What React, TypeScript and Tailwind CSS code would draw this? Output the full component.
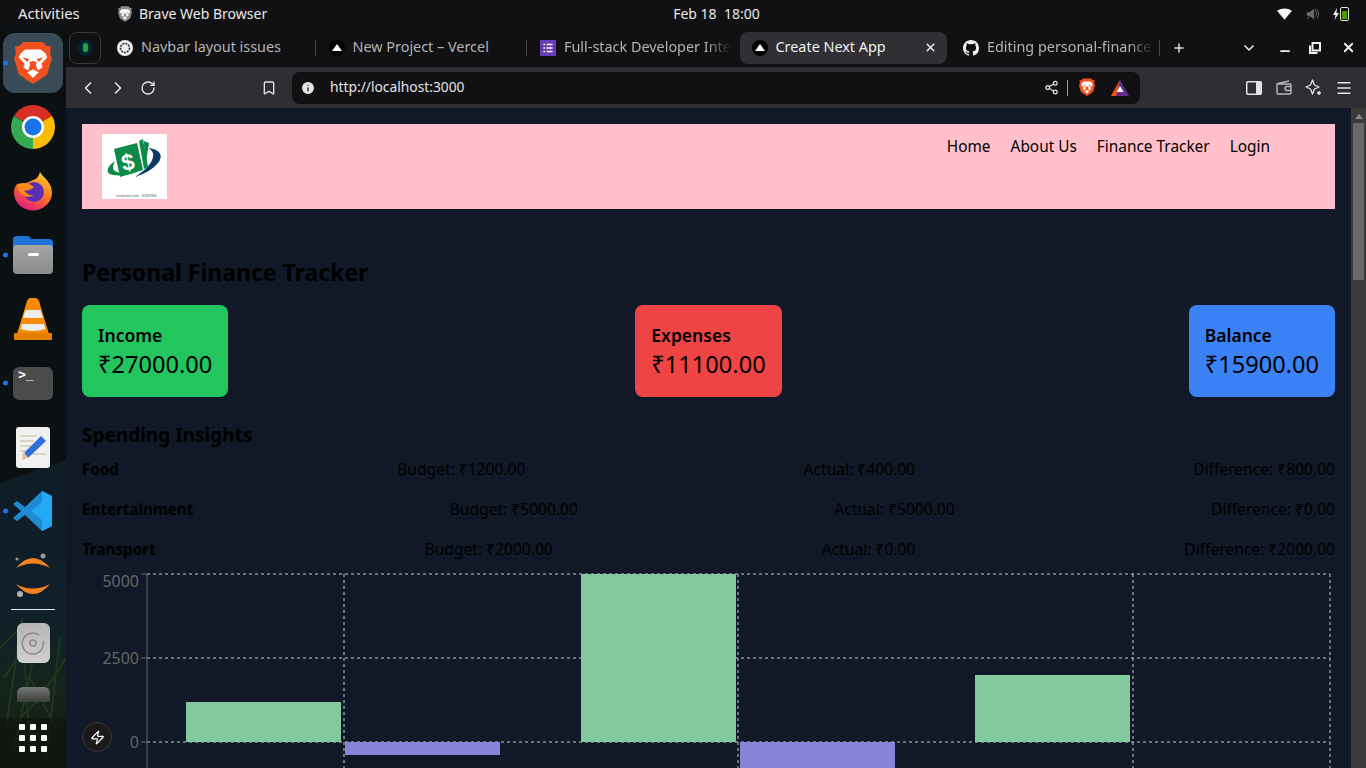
import {
  ChevronDown,
  ChevronLeft,
  ChevronRight,
  Bookmark,
  Info,
  Menu,
  Minus,
  Plus,
  RotateCw,
  Share2,
  X,
  Zap,
} from 'lucide-react'
import type { ReactNode } from 'react'

const BraveIcon = ({ size = 40, gray = false }: { size?: number; gray?: boolean }) => {
  const base = gray ? '#8c8c8c' : '#f1511f'
  return (
    <svg width={size} height={size * 1.15} viewBox="0 0 40 46">
      <path d="M10 1h20l4 4 5 1-1 8 2 4-5 17-10 7-5 3-5-3-10-7L0 18l2-4-1-8 5-1z" fill={base} />
      <path
        d="M12 9h16l5 4 2 4-6 7 1 4-5 3-2-6 1-3-4-1-4 1 1 3-2 6-5-3 1-4-6-7 2-4z"
        fill="#fff"
      />
      <path d="M9 17l7 2-2 3zM31 17l-7 2 2 3z" fill={base} />
      <path d="M14 33l6-3 6 3-6 6z" fill="#fff" />
    </svg>
  )
}

const VercelDot = () => (
  <span className="flex h-4 w-4 shrink-0 items-center justify-center rounded-full bg-black">
    <span className="h-0 w-0 border-x-[5px] border-b-[7px] border-x-transparent border-b-white" />
  </span>
)

const GptDot = () => (
  <svg width="16" height="16" viewBox="0 0 16 16" className="shrink-0">
    <circle cx="8" cy="8" r="8" fill="#eee" />
    <circle cx="8" cy="8" r="4.5" fill="none" stroke="#333" strokeWidth="1.6" strokeDasharray="2 1" />
  </svg>
)

const FormsIcon = () => (
  <svg width="16" height="16" viewBox="0 0 16 16" className="shrink-0">
    <rect width="16" height="16" rx="1" fill="#673ab7" />
    <path d="M3.5 4.5h1.5M6.5 4.5h6M3.5 8h1.5M6.5 8h6M3.5 11.5h1.5M6.5 11.5h6" stroke="#fff" strokeWidth="1.6" />
  </svg>
)

const GithubIcon = () => (
  <svg width="16" height="16" viewBox="0 0 16 16" fill="#f2f2f2" className="shrink-0">
    <path d="M8 0C3.58 0 0 3.58 0 8c0 3.54 2.29 6.53 5.47 7.59.4.07.55-.17.55-.38v-1.34c-2.23.48-2.7-1.07-2.7-1.07-.36-.92-.89-1.17-.89-1.17-.73-.5.05-.49.05-.49.8.06 1.22.82 1.22.82.72 1.22 1.87.87 2.33.66.07-.52.28-.87.51-1.07-1.78-.2-3.64-.89-3.64-3.95 0-.87.31-1.59.82-2.15-.08-.2-.36-1.02.08-2.12 0 0 .67-.21 2.2.82a7.6 7.6 0 0 1 4 0c1.53-1.04 2.2-.82 2.2-.82.44 1.1.16 1.92.08 2.12.51.56.82 1.27.82 2.15 0 3.07-1.87 3.75-3.65 3.95.29.25.54.73.54 1.48v2.2c0 .21.15.46.55.38A8 8 0 0 0 16 8c0-4.42-3.58-8-8-8z" />
  </svg>
)

type TabProps = {
  icon: ReactNode
  title: string
  active?: boolean
  fade?: boolean
  divider?: boolean
}

const Tab = ({ icon, title, active, fade, divider }: TabProps) => (
  <div className="relative flex h-8 w-[211.5px] shrink-0 items-center px-[2px]">
    <div
      className={`flex h-8 w-full items-center gap-2 rounded-lg pl-[12px] ${fade ? 'pr-[5px]' : 'pr-[10px]'} ${
        active ? 'bg-[#2f2f34] text-[#f0f0f0]' : 'text-[#b4b4b6]'
      }`}
    >
      {icon}
      <span
        className={`flex-1 overflow-hidden whitespace-nowrap pb-[2px] text-[14.4px] ${
          fade ? '[mask-image:linear-gradient(to_right,black_85%,transparent)]' : ''
        }`}
      >
        {title}
      </span>
      {active && <X size={13} strokeWidth={3} className="text-[#e6e6e6]" />}
    </div>
    {divider && <span className="absolute -right-px h-4 w-px bg-[#48484c]" />}
  </div>
)

const TopBar = () => (
  <div className="flex h-7 shrink-0 items-center bg-[#111113] text-[14px] text-[#e9e9e9]">
    <span className="ml-[18px] w-[100px] pb-[2px] text-[14.8px]">Activities</span>
    <BraveIcon size={14} gray />
    <span className="ml-[7px] pb-[2px]">Brave Web Browser</span>
    <span className="ml-[406px] pb-[2px]">Feb 18&nbsp;&nbsp;18:00</span>
    <div className="ml-auto mr-[17px] flex items-center gap-[13.5px]">
      <svg width="15" height="12" viewBox="0 0 16 12">
        <path d="M0 2.5Q8-2.5 16 2.5L8 12z" fill="#f5f5f5" />
      </svg>
      <svg width="14" height="14" viewBox="0 0 16 14">
        <path d="M1 5h3l5-4v12l-5-4H1z" fill="#6c6c6c" />
        <path d="M11 4q2 3 0 6M13 2q3 5 0 10M1 13 12 1" stroke="#6c6c6c" fill="none" />
      </svg>
      <div className="flex items-center gap-px">
        <svg width="6" height="12" viewBox="0 0 6 12">
          <path d="M4 0 0 7h2.5L1.5 12 6 5H3.5z" fill="#f2f2f2" />
        </svg>
        <div className="flex h-[14px] w-[9px] flex-col justify-end rounded-[2px] border border-[#e5e5e5] p-px">
          <div className="h-[8px] bg-[#4e9a06]" />
        </div>
      </div>
    </div>
  </div>
)

const TabStrip = () => (
  <div className="flex h-[39px] shrink-0 items-center bg-[#111113] py-[3px]">
    <div className="ml-[3px] mr-[2px] flex h-8 w-8 shrink-0 items-center justify-center rounded-lg border border-[#3a3a3c]">
      <span className="flex h-4 w-4 items-center justify-center rounded-full bg-[#04232b]">
        <span className="h-[9px] w-[5px] rounded-full bg-[#13aa52]" />
      </span>
    </div>
    <Tab icon={<GptDot />} title="Navbar layout issues" divider />
    <Tab icon={<VercelDot />} title="New Project – Vercel" divider />
    <Tab icon={<FormsIcon />} title="Full-stack Developer Intern" fade />
    <Tab icon={<VercelDot />} title="Create Next App" active />
    <Tab icon={<GithubIcon />} title="Editing personal-finance-tracker" fade />
    <span className="ml-[-2px] h-4 w-px bg-[#48484c]" />
    <Plus size={14} strokeWidth={2.5} className="ml-[12px] text-[#dedede]" />
    <ChevronDown size={16} strokeWidth={2.5} className="ml-[55px] text-[#e6e6e6]" />
    <Minus size={14} strokeWidth={3} className="ml-[21px] mt-[6px] text-[#f0f0f0]" />
    <svg width="12" height="12" viewBox="0 0 12 12" className="ml-[17px]">
      <path d="M3.5 1h7.5v7.5H3.5zM1 3.5v7.5h7.5" fill="none" stroke="#f0f0f0" strokeWidth="2" />
    </svg>
    <X size={15} strokeWidth={3} className="ml-[20px] text-[#f0f0f0]" />
  </div>
)

const Toolbar = () => (
  <div className="flex h-[41px] shrink-0 items-center bg-[#2f2f33] text-[#e4e4e6]">
    <ChevronLeft size={20} className="ml-[12px]" />
    <ChevronRight size={20} className="ml-[10px]" />
    <RotateCw size={16} className="ml-[12px]" />
    <Bookmark size={16} className="ml-[105px]" />
    <div className="ml-[15px] flex h-8 w-[848px] items-center rounded-lg bg-[#111113] pl-[8px] pr-[11px]">
      <Info size={16} fill="#e4e4e6" stroke="#111113" />
      <span className="ml-[14px] pb-px text-[13.8px]">http://localhost:3000</span>
      <Share2 size={15} className="ml-auto" />
      <span className="ml-[8px] h-4 w-px bg-[#9a9a9a]" />
      <span className="ml-[11px]">
        <BraveIcon size={16} />
      </span>
      <svg width="18" height="16" viewBox="0 0 18 16" className="ml-[16px]">
        <path d="M9 0 18 16H0z" fill="#662d91" />
        <path d="M9 0 0 16h5z" fill="#ff5000" />
        <path d="M9 6l3.5 6h-7z" fill="#fff" />
      </svg>
    </div>
    <svg width="16" height="14" viewBox="0 0 16 14" className="ml-[106px]">
      <rect x=".75" y=".75" width="14.5" height="12.5" rx="1" fill="none" stroke="#e4e4e6" strokeWidth="1.5" />
      <rect x="10" y="1" width="5" height="12" fill="#e4e4e6" />
    </svg>
    <svg width="16" height="15" viewBox="0 0 16 15" fill="none" stroke="#b8b8ba" strokeWidth="1.4" className="ml-[14px]">
      <path d="M2 3.5 13 1M1 4h13a1 1 0 0 1 1 1v8a1 1 0 0 1-1 1H2a1 1 0 0 1-1-1z" />
      <path d="M15 6.5h-4a2 2 0 0 0 0 4h4" />
    </svg>
    <svg width="17" height="17" viewBox="0 0 17 17" fill="none" stroke="#e4e4e6" strokeWidth="1.3" className="ml-[13px]">
      <path d="M7.5 1 9.5 6 14 8l-4.5 2L7.5 15 5.5 10 1 8l4.5-2z" strokeLinejoin="round" />
      <path d="M14 12v4M12 14h4" strokeWidth="1.5" />
    </svg>
    <Menu size={18} className="ml-[13px]" />
  </div>
)

const Dot = () => (
  <span className="absolute left-[3px] top-1/2 h-[5px] w-[5px] -translate-y-1/2 rounded-full bg-[#1a73e8]" />
)

const DockSlot = ({ children, dot, h = 'h-16' }: { children: ReactNode; dot?: boolean; h?: string }) => (
  <div className={`relative flex w-full shrink-0 items-center justify-center ${h}`}>
    {dot && <Dot />}
    {children}
  </div>
)

const Dock = () => (
  <div className="relative flex w-[66px] shrink-0 flex-col overflow-hidden bg-[#0b1013]">
    <svg className="absolute inset-0" width="66" height="740" viewBox="0 0 66 740">
      <defs>
        <linearGradient id="wall" x1="0" y1="0" x2="0" y2="1">
          <stop offset="0" stopColor="#0e1d26" />
          <stop offset=".5" stopColor="#10202a" />
          <stop offset=".75" stopColor="#15241b" />
          <stop offset="1" stopColor="#111c10" />
        </linearGradient>
      </defs>
      <path d="M0 455 66 432V740H0z" fill="url(#wall)" />
      <path
        d="M6 700 22 590M14 720 40 600M30 720 24 620M46 730 60 610M56 700 30 650M4 650 24 620M40 670 66 630M20 690 50 660M0 620 20 600"
        stroke="#22361d"
        strokeWidth="2"
        fill="none"
      />
      <path d="M0 690h66v50H0z" fill="#0d130c" opacity=".6" />
    </svg>
    <div className="relative flex flex-col pt-[3px]">
      <DockSlot dot>
        <div className="flex h-[60px] w-[60px] items-center justify-center rounded-xl bg-[#3a4b57]">
          <BraveIcon size={38} />
        </div>
      </DockSlot>
      <DockSlot>
        <svg width="44" height="44" viewBox="0 0 44 44">
          <path d="M22 22 3 11A22 22 0 0 1 41 11z" fill="#d93025" />
          <path d="M22 22 3 11A22 22 0 0 0 22 44z" fill="#34a853" />
          <path d="M22 22 41 11A22 22 0 0 1 22 44z" fill="#fbbc04" />
          <circle cx="22" cy="22" r="11" fill="#fff" />
          <circle cx="22" cy="22" r="8.5" fill="#1a73e8" />
        </svg>
      </DockSlot>
      <DockSlot>
        <svg width="40" height="40" viewBox="0 0 40 40">
          <defs>
            <linearGradient id="fox" x1=".8" y1="0" x2=".3" y2="1">
              <stop offset="0" stopColor="#ffd23a" />
              <stop offset=".5" stopColor="#ff7a1a" />
              <stop offset="1" stopColor="#e31587" />
            </linearGradient>
          </defs>
          <path d="M27 0c0 5 12 9 12 22a19 18 0 1 1-38-1c0-3 1-6 4-9 0 3 1 4 3 5 3-6 12-7 16-10 1-2 3-4 3-7z" fill="url(#fox)" />
          <circle cx="21" cy="21" r="10" fill="#5b2fb5" />
          <path d="M5 13c6-2 11-1 16 3-3 3-7 4-10 3 2 4 6 6 10 5-6 4-13 1-16-6z" fill="#ff8a1a" />
        </svg>
      </DockSlot>
      <DockSlot dot>
        <div className="relative h-[38px] w-10">
          <div className="absolute left-0 top-0 h-4 w-[18px] rounded-t bg-[#1f74d8]" />
          <div className="absolute left-0 top-[3px] h-6 w-10 rounded-t bg-[#1f74d8]" />
          <div className="absolute bottom-0 left-0 flex h-[29px] w-10 justify-center rounded bg-linear-to-b from-[#a5a5a5] to-[#8b8b8b] pt-2">
            <div className="h-[3px] w-[11px] rounded-sm bg-white" />
          </div>
        </div>
      </DockSlot>
      <DockSlot>
        <svg width="38" height="44" viewBox="0 0 38 44">
          <path d="M16 1h6q2 0 3 3l10 33H3L13 4q1-3 3-3z" fill="#f68a00" />
          <path d="M11.5 13h15l2.5 8h-20zM8 27h22l1.5 5q-12 4-25 0z" fill="#ededed" />
          <rect x="0" y="36" width="38" height="7" rx="1" fill="#e67e00" />
        </svg>
      </DockSlot>
      <DockSlot dot>
        <div className="h-[33px] w-10 rounded-md bg-[#4b4b4b] pl-[5px] pt-[2px] font-['Liberation_Mono',monospace] text-[13px] font-bold leading-[14px] text-white">
          &gt;_
        </div>
      </DockSlot>
      <DockSlot>
        <svg width="34" height="41" viewBox="0 0 34 41">
          <rect width="34" height="41" rx="3" fill="#f1f1f1" />
          <path d="M4 9h17M4 14h14M4 19h12M4 24h8M15 27h15" stroke="#cfcbb8" strokeWidth="1.5" />
          <path d="M25 9l5 5-17 16-6 2 2-7z" fill="#2f6fdc" />
          <path d="M7 25l5 5-6 3z" fill="#e9c08a" />
        </svg>
      </DockSlot>
      <DockSlot dot>
        <svg width="40" height="40" viewBox="0 0 40 40">
          <path d="M29 0 39 5v30l-10 5L12 24 4 30 0 27l8-7-8-7 4-3 8 6z" fill="#1f8ad2" />
          <path d="M29 0 39 5v30l-10 5zM29 11 18 20l11 9z" fill="#23a9f2" fillRule="evenodd" />
        </svg>
      </DockSlot>
      <DockSlot h="h-[66px]">
        <svg width="40" height="46" viewBox="0 0 40 46">
          <path d="M3 15Q20-5 37 15 20 6 3 15zM3 31Q20 51 37 31 20 40 3 31z" fill="#f58220" />
          <circle cx="30" cy="3" r="2.5" fill="#9a9a9a" />
          <circle cx="4" cy="6" r="1.5" fill="#9a9a9a" />
          <circle cx="7" cy="41" r="3" fill="#b0b0b0" />
        </svg>
      </DockSlot>
      <div className="mx-auto h-px w-11 shrink-0 bg-[#e8e8e8]" />
      <DockSlot h="h-[66px]">
        <div className="flex h-10 w-[33px] items-center justify-center rounded-md bg-linear-to-b from-[#b5b5b5] to-[#d0d0d0]">
          <svg width="24" height="24" viewBox="0 0 24 24" fill="none" stroke="#8a8a8a" strokeWidth="1.5">
            <path d="M18 4a10.5 10.5 0 1 0 4 6" />
            <circle cx="12" cy="12" r="3" />
          </svg>
        </div>
      </DockSlot>
      <DockSlot h="h-[36px]">
        <div className="h-[15px] w-[33px] rounded-t-md bg-linear-to-b from-[#777] to-[#3b3f39]" />
      </DockSlot>
      <DockSlot h="h-[52px]">
        <div className="grid grid-cols-3 gap-[5px]">
          {Array.from({ length: 9 }).map((_, i) => (
            <span key={i} className="h-[6px] w-[6px] rounded-[1px] bg-white" />
          ))}
        </div>
      </DockSlot>
    </div>
  </div>
)

const Logo = () => (
  <svg width="65" height="65" viewBox="0 0 65 65" className="bg-white">
    <path d="M46 14C58 15 62 22 56 29 50 36 42 40 33 43 42 37 50 30 51 23 52 19 50 16 46 14z" fill="#0b3a66" />
    <path d="M13 27C4 33 3 40 11 41c8 1 16 0 24-3-8 2-18 2-22-1-3-2-2-6 0-10z" fill="#0b8a48" />
    <path d="M37 7 41 5l5 28-4 2z" fill="#0b8a48" />
    <path d="M42 7 47 9l-4 26z" fill="#0b8a48" />
    <path d="M12 15 35 9l6 27-23 7z" fill="#0b8a48" />
    <text
      x="26"
      y="36"
      fontSize="23"
      fontWeight="700"
      fill="#fff"
      textAnchor="middle"
      transform="rotate(-12 26 29)"
      fontFamily="Liberation Sans, sans-serif"
    >
      $
    </text>
    <text x="14" y="63" fontSize="3" fill="#555" fontFamily="Liberation Sans, sans-serif">
      shutterstock.com · 763087894
    </text>
  </svg>
)

const StatCard = ({ label, value, color }: { label: string; value: string; color: string }) => (
  <div className={`rounded-lg p-4 text-black ${color}`}>
    <div className="pt-px text-[17.5px] font-semibold leading-[27px]">{label}</div>
    <div className="pb-[2px] text-[23.6px] leading-[30px]">{value}</div>
  </div>
)

const InsightRow = ({ rows }: { rows: [string, string, string, string] }) => (
  <div className="mb-4 flex justify-between text-[15.6px] leading-6 text-black">
    <span className="text-[15.2px] font-bold">{rows[0]}</span>
    <span>Budget: {rows[1]}</span>
    <span>Actual: {rows[2]}</span>
    <span>Difference: {rows[3]}</span>
  </div>
)

const bars = [
  { x: 104, y: 133, h: 40, fill: '#82ca9d' },
  { x: 263, y: 173, h: 13, fill: '#8884d8' },
  { x: 499, y: 5, h: 168, fill: '#82ca9d' },
  { x: 658, y: 173, h: 40, fill: '#8884d8' },
  { x: 893, y: 106, h: 67, fill: '#82ca9d' },
]

const Chart = () => (
  <svg width="1253" height="199" viewBox="0 0 1253 199" className="block overflow-hidden">
    <g stroke="#ccc" strokeDasharray="3 3" fill="none">
      <path d="M65 5H1248M65 89H1248M65 173H1248" />
      <path d="M262 5V199M656 5V199M1051 5V199M1248 5V199" />
    </g>
    {bars.map((b) => (
      <rect key={b.x} x={b.x} y={b.y} width="155" height={b.h} fill={b.fill} />
    ))}
    <path d="M65 5V199M59 5H65M59 89H65M59 173H65" stroke="#666" fill="none" />
    <g fill="#666" fontSize="16" textAnchor="end">
      <text x="57" y="18">5000</text>
      <text x="57" y="95">2500</text>
      <text x="57" y="179">0</text>
    </g>
  </svg>
)

const Page = () => (
  <div className="relative flex-1 overflow-hidden bg-[#111827] px-4 pt-4">
    <nav className="flex justify-between bg-[#ffc0cb] py-[10px] pl-5 pr-[65px] text-[15.4px] text-black">
      <Logo />
      <ul className="flex gap-5 pt-px">
        <li>Home</li>
        <li>About Us</li>
        <li>Finance Tracker</li>
        <li>Login</li>
      </ul>
    </nav>
    <h1 className="mb-[17px] mt-[47px] text-[23px] font-bold leading-8 text-black">Personal Finance Tracker</h1>
    <div className="flex justify-between">
      <StatCard label="Income" value="₹27000.00" color="bg-[#22c55e]" />
      <StatCard label="Expenses" value="₹11100.00" color="bg-[#ef4444]" />
      <StatCard label="Balance" value="₹15900.00" color="bg-[#3b82f6]" />
    </div>
    <h2 className="mb-2 mt-6 text-[19px] font-bold leading-7 text-black">Spending Insights</h2>
    <InsightRow rows={['Food', '₹1200.00', '₹400.00', '₹800.00']} />
    <InsightRow rows={['Entertainment', '₹5000.00', '₹5000.00', '₹0.00']} />
    <InsightRow rows={['Transport', '₹2000.00', '₹0.00', '₹2000.00']} />
    <div className="-mt-2">
      <Chart />
    </div>
    <div className="absolute bottom-4 left-4 flex h-[30px] w-[30px] items-center justify-center rounded-full border border-[#3a3a3a] bg-[#1a1a1a]">
      <Zap size={15} className="text-white" />
    </div>
  </div>
)

const Scrollbar = () => (
  <div className="flex w-[15px] shrink-0 flex-col items-center bg-[#3b3b3b]">
    <span className="mt-[6px] h-0 w-0 border-x-[4px] border-b-[5px] border-x-transparent border-b-[#8a8a8a]" />
    <div className="mt-[4px] h-[157px] w-[11px] bg-[#686868]" />
  </div>
)

export default function App() {
  return (
    <div className="flex h-screen w-screen flex-col overflow-hidden font-['Noto_Sans',sans-serif]">
      <TopBar />
      <div className="flex min-h-0 flex-1">
        <Dock />
        <div className="flex min-w-0 flex-1 flex-col">
          <TabStrip />
          <Toolbar />
          <div className="flex min-h-0 flex-1">
            <Page />
            <Scrollbar />
          </div>
        </div>
      </div>
    </div>
  )
}
